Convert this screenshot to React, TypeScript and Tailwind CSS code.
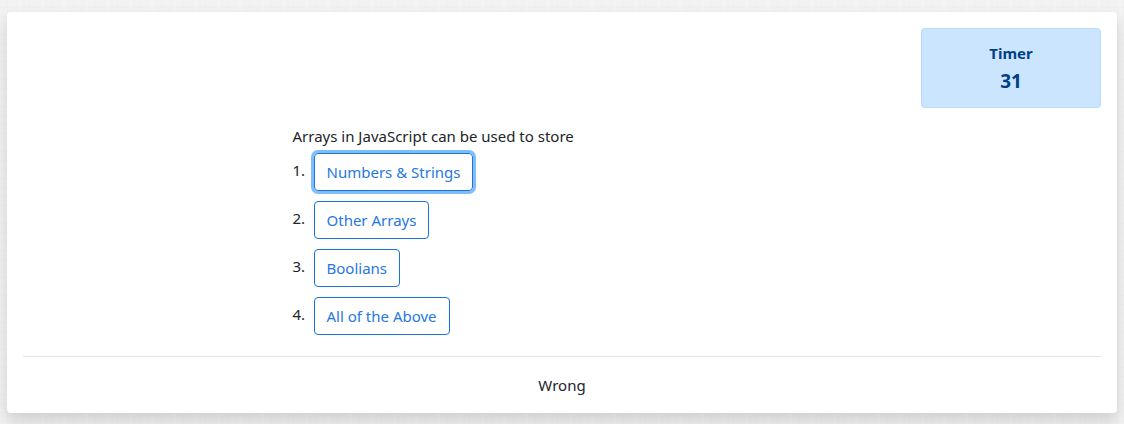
import { useState } from "react";

const answers = ["Numbers & Strings", "Other Arrays", "Boolians", "All of the Above"];

function Timer({ seconds }: { seconds: number }) {
  return (
    <div
      role="timer"
      className="ml-auto flex w-45 flex-col items-center rounded border border-[#b8daff] bg-[#cce5ff] px-5 pt-3 pb-2.5 font-bold text-[#004085]"
    >
      <span className="leading-6">Timer</span>
      <span className="text-[19px] leading-8">{seconds}</span>
    </div>
  );
}

export default function App() {
  const [selected, setSelected] = useState(0);

  return (
    <div className="min-h-screen bg-[#f2f2f2] bg-[repeating-linear-gradient(90deg,#0000_0px,#0000_7px,#00000003_7px,#00000003_8px,#0000_8px,#0000_19px,#ffffff30_19px,#ffffff30_22px),repeating-linear-gradient(0deg,#0000_0px,#0000_3px,#00000003_3px,#00000003_4px,#0000_4px,#0000_9px)] px-[7px] py-3 font-['Noto_Sans','Open_Sans',sans-serif] text-[15px] leading-6 text-[#212529]">
      <main className="rounded bg-white p-4 shadow-[0_8px_16px_rgba(0,0,0,0.15)]">
        <Timer seconds={31} />
        <section className="mt-4 ml-[25%]">
          <h1>Arrays in JavaScript can be used to store</h1>
          <ol className="mt-[5px] flex flex-col gap-2.5">
            {answers.map((answer, index) => (
              <li key={answer} className="flex items-start">
                <span className="w-[21px] pt-[5px]">{index + 1}.</span>
                <button
                  type="button"
                  onClick={() => setSelected(index)}
                  className={
                    index === selected
                      ? "rounded border border-[#1975d8] px-3 py-1.5 text-[#2678e0] shadow-[0_0_0_3px_#80bdff] outline-none"
                      : "rounded border border-[#1975d8] px-3 py-1.5 text-[#2678e0] outline-none focus-visible:shadow-[0_0_0_3px_#80bdff]"
                  }
                >
                  {answer}
                </button>
              </li>
            ))}
          </ol>
        </section>
        <hr className="mt-[21px] mb-4 border-[#e5e5e5]" />
        <p className="text-center" role="status">Wrong</p>
      </main>
    </div>
  );
}
